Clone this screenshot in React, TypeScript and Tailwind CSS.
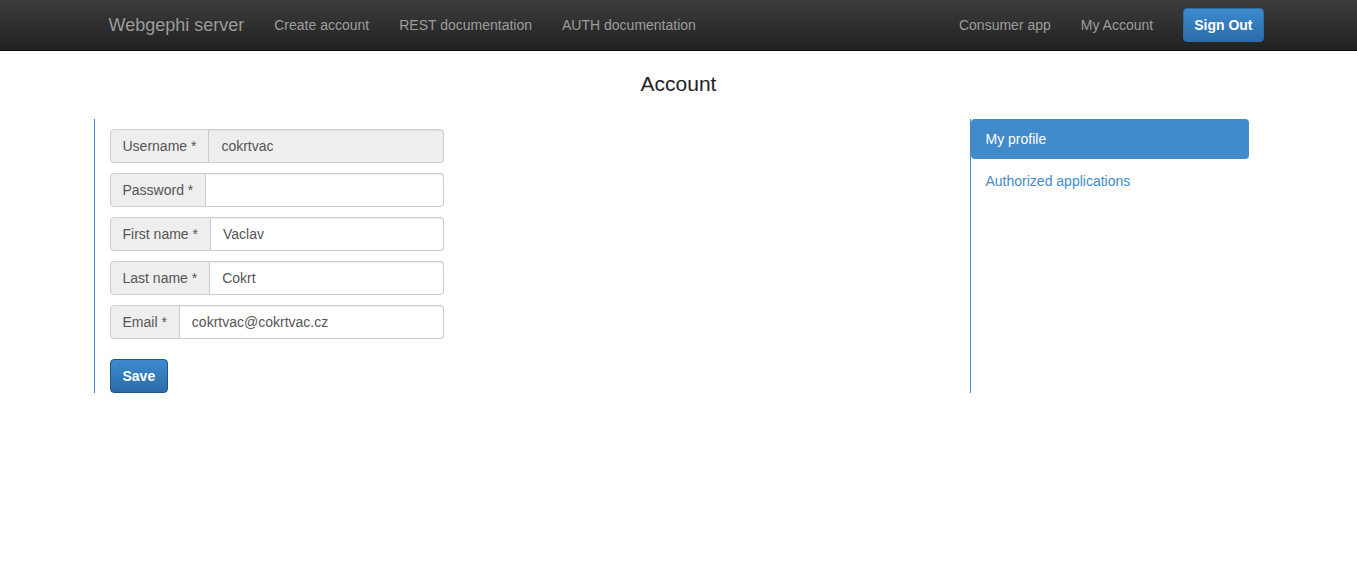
import React from "react";

const fields = [
  { label: "Username *", value: "cokrtvac", readOnly: true },
  { label: "Password *", value: "", readOnly: false },
  { label: "First name *", value: "Vaclav", readOnly: false },
  { label: "Last name *", value: "Cokrt", readOnly: false },
  { label: "Email *", value: "cokrtvac@cokrtvac.cz", readOnly: false },
];

export default function App() {
  return (
    <div className="min-h-[572px] bg-white font-['Liberation_Sans',Arial,sans-serif] text-[14px] text-[#333]">
      <nav className="h-[51px] border-b border-[#080808] bg-gradient-to-b from-[#3c3c3c] to-[#222222]">
        <div className="mx-auto flex h-[50px] w-[1170px] items-center">
          <span className="px-[15px] text-[18px] leading-[20px] text-[#9d9d9d] [text-shadow:0_-1px_0_rgba(0,0,0,0.25)]">
            Webgephi server
          </span>
          <a className="px-[15px] leading-[20px] text-[#9d9d9d]">Create account</a>
          <a className="px-[15px] leading-[20px] text-[#9d9d9d]">REST documentation</a>
          <a className="px-[15px] leading-[20px] text-[#9d9d9d]">AUTH documentation</a>
          <div className="ml-auto flex items-center">
            <a className="px-[15px] leading-[20px] text-[#9d9d9d]">Consumer app</a>
            <a className="px-[15px] leading-[20px] text-[#9d9d9d]">My Account</a>
            <button className="ml-[15px] h-[34px] rounded-[4px] border border-[#2e6da4] bg-gradient-to-b from-[#3d8bcf] to-[#2b6ca8] px-[10px] font-bold leading-[20px] text-white">
              Sign Out
            </button>
          </div>
        </div>
      </nav>

      <div className="mx-auto w-[1170px]">
        <h1 className="mb-[23px] mt-[21px] text-center text-[21px] leading-[24px] text-[#222]">Account</h1>
        <div className="flex">
          <div className="w-[876px] border-l border-[#428bca] pl-[15px] pt-[10px]">
            <div className="w-[334px]">
              {fields.map((f) => (
                <div key={f.label} className="mb-[10px] flex h-[34px]">
                  <span className="flex items-center whitespace-nowrap rounded-l-[4px] border border-[#ccc] bg-[#eee] px-[12px] leading-[20px] text-[#555]">
                    {f.label}
                  </span>
                  <div
                    className={`flex flex-1 items-center rounded-r-[4px] border border-l-0 border-[#ccc] px-[12px] leading-[20px] text-[#555] shadow-[inset_0_1px_1px_rgba(0,0,0,0.075)] ${
                      f.readOnly ? "bg-[#eee]" : "bg-white"
                    }`}
                  >
                    {f.value}
                  </div>
                </div>
              ))}
              <button className="mt-[10px] h-[34px] rounded-[4px] border border-[#245580] bg-gradient-to-b from-[#3d8bcf] to-[#2b6ca8] px-[12px] font-bold leading-[20px] text-white">
                Save
              </button>
            </div>
          </div>
          <div className="w-[294px] border-l border-[#428bca] pr-[15px]">
            <div className="h-[40px] rounded-[4px] bg-[#428bca] px-[15px] py-[10px] leading-[20px] text-white">My profile</div>
            <div className="mt-[2px] h-[40px] px-[15px] py-[10px] leading-[20px] text-[#428bca]">Authorized applications</div>
          </div>
        </div>
      </div>
    </div>
  );
}
